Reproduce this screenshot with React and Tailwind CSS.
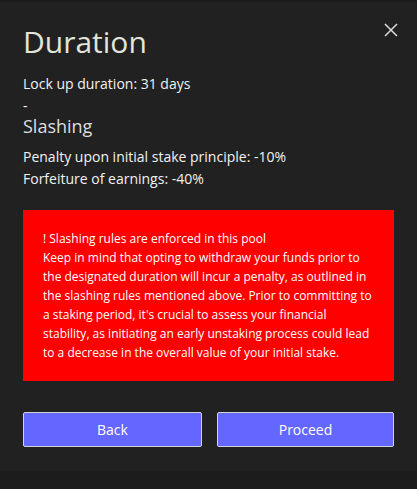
import React from 'react';

function CloseIcon() {
  return (
    <svg width="14" height="14" viewBox="0 0 14 14" fill="none" stroke="#dcdcdc" strokeWidth="1.5">
      <path d="M1 1 L13 13 M13 1 L1 13" />
    </svg>
  );
}

export default function App() {
  return (
    <div className="w-[417px] h-[489px] bg-[#1c1c1c] pt-[2px]" style={{ fontFamily: '"Open Sans", sans-serif' }}>
      <div className="relative h-[469px] bg-[#212121] px-[23px] pt-[20px]">
        <button className="absolute right-[19px] top-[21px]">
          <CloseIcon />
        </button>

        <h1 className="text-[30px] leading-[40px] text-[#e4e4dc]">Duration</h1>

        <p className="mt-[11px] text-[14px] leading-[22px] text-[#f2f2f2]">Lock up duration: 31 days</p>
        <p className="text-[14px] leading-[22px] text-[#f2f2f2]">-</p>
        <h2 className="text-[18px] leading-[18px] text-[#dedede]">Slashing</h2>

        <p className="mt-[11px] text-[14px] leading-[22px] text-[#f2f2f2]">Penalty upon initial stake principle: -10%</p>
        <p className="text-[14px] leading-[22px] text-[#f2f2f2]">Forfeiture of earnings: -40%</p>

        <div className="mt-[20px] bg-[#ff0000] px-[20px] py-[19px] text-[12px] leading-[19px] text-white">
          <p>! Slashing rules are enforced in this pool</p>
          <p>
            Keep in mind that opting to withdraw your funds prior to the designated duration will incur a penalty, as
            outlined in the slashing rules mentioned above. Prior to committing to a staking period, it's crucial to
            assess your financial stability, as initiating an early unstaking process could lead to a decrease in the
            overall value of your initial stake.
          </p>
        </div>

        <div className="mt-[31px] flex gap-[15px]">
          <button className="h-[35px] w-[179px] rounded-[2px] border border-[#d4d4d4] bg-[#6467ff] text-[14px] text-white">
            Back
          </button>
          <button className="h-[35px] flex-1 rounded-[2px] border border-[#d4d4d4] bg-[#6467ff] text-[14px] text-white">
            Proceed
          </button>
        </div>
      </div>
    </div>
  );
}
